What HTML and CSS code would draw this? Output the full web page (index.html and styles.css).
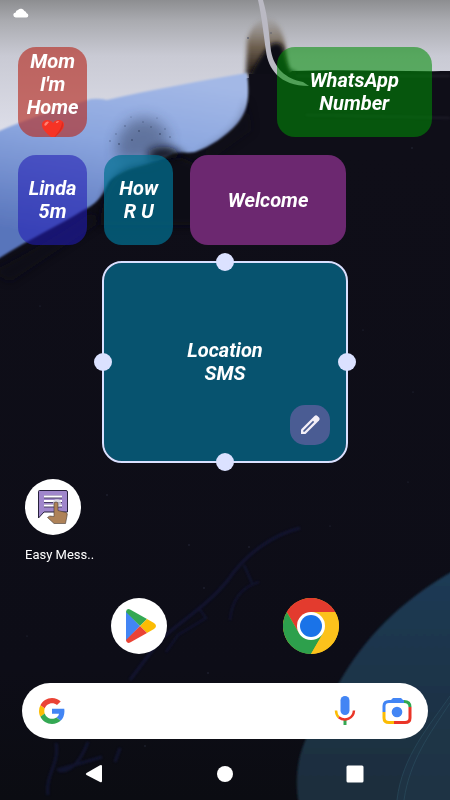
FILE: index.html
```html
<!DOCTYPE html>
<html lang="en">
<head>
<meta charset="utf-8">
<meta name="viewport" content="width=device-width, initial-scale=1">
<title>Home screen</title>
<link rel="stylesheet" href="styles.css">
</head>
<body>
<svg class="wallpaper" viewBox="0 0 450 800" preserveAspectRatio="none" aria-hidden="true">
  <defs>
    <linearGradient id="sky" x1="0" y1="0" x2="0" y2="140" gradientUnits="userSpaceOnUse">
      <stop offset="0" stop-color="#8d8e91"/><stop offset=".15" stop-color="#aaabb0"/><stop offset=".4" stop-color="#c9cad4"/><stop offset="1" stop-color="#dfe0eb"/>
    </linearGradient>
    <linearGradient id="wave" x1="150" y1="75" x2="120" y2="250" gradientUnits="userSpaceOnUse">
      <stop offset="0" stop-color="#a3b8e6"/><stop offset=".4" stop-color="#8ba6df"/><stop offset="1" stop-color="#5874bb"/>
    </linearGradient>
    <linearGradient id="night" x1="0" y1="150" x2="0" y2="800" gradientUnits="userSpaceOnUse">
      <stop offset="0" stop-color="#0f0e18"/><stop offset=".8" stop-color="#0d0d17"/><stop offset="1" stop-color="#0b0c12"/>
    </linearGradient>
    <linearGradient id="planet" x1="0" y1="580" x2="0" y2="800" gradientUnits="userSpaceOnUse">
      <stop offset="0" stop-color="#1f3a54"/><stop offset="1" stop-color="#1b2d3c"/>
    </linearGradient>
    <linearGradient id="peak" x1="0" y1="16" x2="0" y2="70" gradientUnits="userSpaceOnUse">
      <stop offset="0" stop-color="#6b5b45" stop-opacity="0"/><stop offset=".55" stop-color="#5c4a33" stop-opacity=".8"/><stop offset="1" stop-color="#2b221c"/>
    </linearGradient>
    <filter id="soft1" x="-10%" y="-10%" width="120%" height="120%"><feGaussianBlur stdDeviation="1"/></filter>
    <filter id="soft2" x="-20%" y="-20%" width="140%" height="140%"><feGaussianBlur stdDeviation="2"/></filter>
    <filter id="soft4" x="-60%" y="-60%" width="220%" height="220%"><feGaussianBlur stdDeviation="4"/></filter>
    <filter id="soft8" x="-80%" y="-80%" width="260%" height="260%"><feGaussianBlur stdDeviation="7"/></filter>
  </defs>
  <rect width="450" height="800" fill="url(#night)"/>
  <path d="M-9 -9H459V71C400 72 350 69 292 71L284 78H247L90 160L-9 200Z" fill="url(#sky)"/>
  <path d="M246 76L247 40Q254 18 270 18Q281 24 285 44L288 76Z" fill="url(#peak)" filter="url(#soft2)"/>
  <path d="M247 82Q256 62 268 47Q277 39 283 47Q285 62 290 70L296 72V110H249Z" fill="#0f0e18" filter="url(#soft2)"/>
  <rect x="249" y="74" width="100" height="90" fill="#0f0e18"/>
  <path d="M-10 135C28 118 60 109 91 99Q99 98 107 100C150 90 205 80 247 73C250 97 248 111 237 124C226 136 210 147 195 152C184 154 178 150 168 156C150 166 122 168 109 182C101 199 96 204 82 211C58 226 27 240 -10 264Z" fill="url(#wave)" filter="url(#soft1)"/>
  <path d="M100 225Q104 180 128 168L180 157L200 166V225Z" fill="#0f0e18" opacity=".9" filter="url(#soft4)"/>
  <path d="M148 151Q160 144 172 148L186 156L150 162Z" fill="#0f0e18" filter="url(#soft4)"/>
  <path d="M116 142Q126 116 146 118T170 142L150 160H118Z" fill="#29344f" opacity=".45" filter="url(#soft8)"/>
  <path d="M247 98Q246 130 196 155L216 156L252 130Z" fill="#0f0e18" opacity=".35" filter="url(#soft4)"/>
  <path d="M-8 272Q60 236 92 212L100 222L10 282Z" fill="#0f0e18" opacity=".6" filter="url(#soft4)"/>
  <g fill="#283553" opacity=".5">
    <circle cx="116" cy="134" r=".7"/><circle cx="125" cy="126" r=".8"/><circle cx="132" cy="140" r="1"/><circle cx="143" cy="122" r=".7"/><circle cx="151" cy="127" r=".8"/><circle cx="160" cy="134" r="1"/><circle cx="119" cy="144" r="1"/><circle cx="165" cy="129" r=".7"/><circle cx="139" cy="131" r="1"/><circle cx="131" cy="117" r=".6"/><circle cx="157" cy="118" r=".6"/><circle cx="110" cy="141" r=".8"/><circle cx="170" cy="137" r=".8"/><circle cx="248" cy="38" r="1"/><circle cx="271" cy="33" r=".8"/>
  </g>
  <path d="M258 0C262 18 264 38 266 51C268 68 279 86 309 86L303 82C286 79 274 68 271 51C269 34 268 17 263 0Z" fill="#bab9c3"/>
  <path d="M296 76H450M306 115Q370 116 450 118" fill="none" stroke="#333141" stroke-width="2" opacity=".4" filter="url(#soft1)"/>
  <path d="M460 567C400 600 365 638 340 681C317 720 287 750 300 810H460Z" fill="url(#planet)" filter="url(#soft1)"/>
  <path d="M450 696C430 725 402 756 397 800H450Z" fill="#20394a" opacity=".55"/>
  <path d="M450 696C430 725 402 756 397 800M450 703C429 735 410 760 404 800" fill="none" stroke="#2b5062" opacity=".6"/>
  <g fill="none" stroke="#171a4a" opacity=".5" filter="url(#soft1)">
    <path d="M300 528C275 534 247 552 228 580C209 604 180 622 160 640L130 680" stroke-width="3"/>
    <path d="M259 582C241 587 232 600 230 620M244 565L252 583M198 607L206 618L178 635L166 652" stroke-width="2"/>
    <path d="M48 795C45 775 60 763 56 743M59 771Q76 773 88 742M57 770L102 757M120 748L115 762" stroke-width="3"/>
  </g>
  <g fill="#3b4056" opacity=".7">
    <circle cx="40" cy="306" r=".6"/><circle cx="363" cy="330" r=".6"/><circle cx="413" cy="392" r=".6"/><circle cx="412" cy="148" r=".7"/><circle cx="189" cy="545" r=".7"/><circle cx="107" cy="495" r=".7"/><circle cx="204" cy="588" r=".7"/><circle cx="249" cy="547" r=".7"/><circle cx="27" cy="636" r=".6"/><circle cx="208" cy="673" r=".7"/><circle cx="145" cy="746" r=".7"/><circle cx="330" cy="526" r=".6"/><circle cx="408" cy="482" r=".6"/>
  </g>
</svg>

<div class="screen">
  <header class="status">
    <svg width="16" height="10" viewBox="0 0 16 10" role="img" aria-label="Cloud"><path d="M3 9.500A2.500 2.500 0 0 1 2.700 4.400A2.700 2.700 0 0 1 5 2A3.900 3.900 0 0 1 11.400 3A3.300 3.300 0 0 1 13.600 5.200A2.200 2.200 0 0 1 13.500 9.500Z" fill="#fff"/></svg>
  </header>

  <main class="widgets">
    <button class="tile mom" type="button"><span>Mom<br>I'm<br>Home</span>
      <svg class="heart" width="22" height="20" viewBox="0 0 22 20" role="img" aria-label="Heart"><path d="M11 20C7 16 0 11 0 6C0 1 7-1 11 4C15-1 22 1 22 6C22 11 15 16 11 20Z" fill="#f63325"/><path d="M20 2.500Q23 7 18 13L11 20C15 14 20 10 20 2.500Z" fill="#d92c20"/><path d="M3 4Q5 1.500 7 3Q5 6 3 7Q1.500 6 3 4M14 3Q16 1.500 17 2.500Q16 4 14 4Z" fill="#ff8273"/></svg>
    </button>
    <button class="tile whatsapp" type="button">WhatsApp<br>Number</button>
    <button class="tile linda" type="button">Linda<br>5m</button>
    <button class="tile how" type="button">How<br>R U</button>
    <button class="tile welcome" type="button">Welcome</button>
    <section class="resize" aria-label="Resize widget">
      <button class="tile location" type="button">Location<br>SMS</button>
      <span class="handle top"></span><span class="handle right"></span><span class="handle bottom"></span><span class="handle left"></span>
      <button class="edit" type="button" aria-label="Edit widget">
        <svg width="22" height="22" viewBox="0 0 22 22"><path d="M2 20V15.500L15.500 2Q17 .500 18.500 2L20 3.500Q21.500 5 20 6.500L6.500 20Z" fill="#f3eff7"/><path d="M4.300 17.700V16.500L14 6.800L15.200 8L5.500 17.700Z" fill="#4a5c93"/></svg>
      </button>
    </section>
    <a class="app" href="#easy">
      <svg class="app-icon" viewBox="0 0 56 56" aria-hidden="true">
        <circle cx="28" cy="28" r="28" fill="#fff"/>
        <path d="M14.500 11.500H41Q42.500 11.500 42.500 13V33H19L13.500 39V12.500Q13.500 11.500 14.500 11.500Z" fill="#9f86cb" stroke="#27213b"/>
        <path d="M19 18H37M19 22.500H37M19 27H37" stroke="#473d62" stroke-width="3"/><path d="M19 17.500H37M19 22H37M19 26.500H37" stroke="#fff" stroke-width="2"/>
        <circle cx="32" cy="24" r="4" fill="#d2d0d8" opacity=".75"/>
        <path d="M29 25Q29 23 31 23T33 25V31.500L41 33.500Q43 34 42 37L40.500 44.500H29L22.500 38.500Q24 36 29 37.500Z" fill="#ae8258" stroke="#473b36" stroke-width=".6"/>
      </svg>
      <span>Easy Mess..</span>
    </a>
  </main>

  <nav class="dock" aria-label="Apps">
    <a class="play" href="#play" aria-label="Play Store">
      <svg class="app-icon" viewBox="0 0 56 56"><circle cx="28" cy="28" r="28" fill="#fff"/>
        <path d="M15 13V43L29 28Z" fill="#4285f4"/><path d="M15 14Q15.500 9.500 20 12L36 21L29 28Z" fill="#34a853"/><path d="M36 21L43 25Q47 28 43 31L36 35L29 28Z" fill="#fbbc04"/><path d="M15 42Q15.500 46.500 20 44L36 35L29 28Z" fill="#ea4335"/>
      </svg>
    </a>
    <a class="chrome" href="#chrome" aria-label="Chrome">
      <svg class="app-icon" viewBox="0 0 56 56"><circle cx="28" cy="28" r="28" fill="#fcc21c"/>
        <path d="M28 28L16 35L3.700 14A28 28 0 0 1 52.300 14H28Z" fill="#e33b2e"/><path d="M3.700 14A28 28 0 0 0 28 56L40.200 35L28 28L16 35Z" fill="#2da04c"/><path d="M28 14H52.300A28 28 0 0 1 28 56L40.200 35Z" fill="#fcc21c"/>
        <circle cx="28" cy="28" r="14" fill="#fff"/><circle cx="28" cy="28" r="11" fill="#1a73e8"/>
      </svg>
    </a>
  </nav>

  <form class="search" role="search">
    <svg width="26" height="26" viewBox="0 0 48 48" aria-hidden="true"><path fill="#EA4335" d="M24 9.500c3.540 0 6.710 1.220 9.210 3.600l6.850-6.850C35.900 2.380 30.470 0 24 0 14.620 0 6.510 5.380 2.560 13.220l7.980 6.190C12.430 13.720 17.740 9.500 24 9.500z"/><path fill="#4285F4" d="M46.980 24.550c0-1.570-.15-3.090-.38-4.550H24v9.020h12.940c-.58 2.960-2.260 5.480-4.780 7.180l7.730 6c4.510-4.180 7.090-10.360 7.090-17.650z"/><path fill="#FBBC05" d="M10.530 28.590A14.500 14.500 0 0 1 9.770 24c0-1.600.27-3.140.76-4.590l-7.980-6.190A23.900 23.900 0 0 0 0 24c0 3.880.92 7.540 2.560 10.780z"/><path fill="#34A853" d="M24 48c6.480 0 11.930-2.130 15.890-5.810l-7.730-6c-2.150 1.450-4.920 2.300-8.160 2.300-6.260 0-11.570-4.220-13.470-9.910l-7.980 6.190C6.510 42.620 14.620 48 24 48z"/></svg>
    <input type="text" aria-label="Search">
    <button type="button" aria-label="Voice search">
      <svg width="22" height="30" viewBox="0 0 22 30"><rect x="6.500" y="0" width="9" height="19" rx="4.500" fill="#4285f4"/><path d="M11 23V29" stroke="#34a853" stroke-width="3"/><path d="M2 14.500Q2.200 19 4.700 21.200" fill="none" stroke="#fbbc04" stroke-width="2.500"/><path d="M4.700 21.200C11 26 19.500 22.500 20 14.500" fill="none" stroke="#ea3527" stroke-width="2.500"/></svg>
    </button>
    <button type="button" aria-label="Camera search">
      <svg width="30" height="28" viewBox="0 0 30 28" fill="none" stroke-width="3"><path d="M2 15V9Q2 4.500 7 4.500H22" stroke="#4285f4"/><path d="M7 5L11 1H19L23 5Z" fill="#4285f4"/><path d="M22 4.500Q28 4.500 28 10" stroke="#2fa84f"/><path d="M28 10V21Q28 25.500 23 25.500H12" stroke="#ea3527"/><path d="M2 15V21Q2 25.500 7 25.500H12" stroke="#fbbc04"/><circle cx="15" cy="15" r="5.300" fill="#4285f4"/></svg>
    </button>
  </form>

  <nav class="system" aria-label="System">
    <button type="button" aria-label="Back"><svg width="18" height="20" viewBox="0 0 18 20"><path d="M1.500 9L15 1.200Q17 .500 17 2V17Q17 19 15 18L1.500 11Q0 10 1.500 9Z" fill="#fff"/></svg></button>
    <button type="button" aria-label="Home"><svg width="18" height="18" viewBox="0 0 18 18"><circle cx="9" cy="9" r="8" fill="#fff"/></svg></button>
    <button type="button" aria-label="Recent apps"><svg width="18" height="18" viewBox="0 0 18 18"><rect x=".5" y=".5" width="17" height="17" rx="1.500" fill="#fff"/></svg></button>
  </nav>
</div>
</body>
</html>
```
FILE: styles.css
```css
* { box-sizing: border-box; }

body {
  margin: 0;
  background: #0f0e18;
  color: #fff;
  font-family: Roboto, "Liberation Sans", sans-serif;
}

button {
  border: 0;
  padding: 0;
  background: none;
  color: inherit;
  font: inherit;
  cursor: pointer;
}

svg { display: block; }

.wallpaper {
  position: fixed;
  inset: 0;
  width: 100%;
  height: 100%;
  z-index: -1;
}

.screen {
  display: flex;
  flex-direction: column;
  min-height: 100vh;
}

.status {
  height: 47px;
  padding: 8px 13px;
}

.widgets {
  display: grid;
  grid-template-columns: repeat(5, minmax(0, 1fr));
  grid-auto-rows: 90px;
  gap: 18px 17px;
  padding: 0 18px;
}

.tile {
  border-radius: 18px;
  overflow: hidden;
  font-size: 20px;
  font-weight: 700;
  font-style: italic;
  line-height: 23px;
  text-align: center;
}

.mom {
  display: flex;
  flex-direction: column;
  align-items: center;
  padding-top: 3px;
  background: rgb(182 43 32 / 64%);
}

.heart { flex: none; }

.whatsapp {
  grid-column: 4 / 6;
  background: rgb(0 140 5 / 57%);
}

.linda {
  grid-row: 2;
  background: rgb(32 28 180 / 58%);
}

.how {
  grid-area: 2 / 2;
  background: rgb(2 112 145 / 72%);
}

.welcome {
  grid-area: 2 / 3 / auto / 5;
  background: #6c2870;
}

.resize {
  grid-area: 3 / 2 / 5 / 5;
  position: relative;
  display: grid;
  border-radius: 18px;
  outline: 2px solid #d9e0ff;
}

.location { background: #07536f; }

.handle {
  position: absolute;
  width: 18px;
  height: 18px;
  border-radius: 50%;
  background: #dbe1ff;
  transform: translate(-50%, -50%);
}

.top { left: 50%; top: -1px; }
.right { left: calc(100% + 1px); top: 50%; }
.bottom { left: 50%; top: calc(100% + 1px); }
.left { left: -1px; top: 50%; }

.edit {
  position: absolute;
  right: 16px;
  bottom: 16px;
  display: grid;
  place-items: center;
  width: 40px;
  height: 40px;
  border-radius: 15px;
  background: #4a5c93;
}

.app {
  grid-row: 5;
  display: flex;
  flex-direction: column;
  gap: 11px;
  padding-left: 7px;
  color: #fff;
  font-size: 13px;
  line-height: 18px;
  white-space: nowrap;
  text-decoration: none;
}

.app-icon {
  flex: none;
  width: 56px;
  height: 56px;
}

.dock {
  display: grid;
  grid-template-columns: repeat(5, minmax(0, 1fr));
  gap: 17px;
  justify-items: center;
  padding: 29px 18px;
}

.play { grid-column: 2; }
.chrome { grid-column: 4; }

.search {
  display: flex;
  align-items: center;
  gap: 26px;
  height: 56px;
  margin: 0 22px;
  padding: 0 16px 0 17px;
  border-radius: 28px;
  background: #fff;
}

.search input {
  flex: 1;
  min-width: 0;
  border: 0;
  outline: 0;
  background: none;
  color: #202124;
  font: inherit;
}

.system {
  flex: 1;
  display: flex;
  align-items: center;
  justify-content: space-between;
  padding: 8px 86px 0 85px;
}
```
